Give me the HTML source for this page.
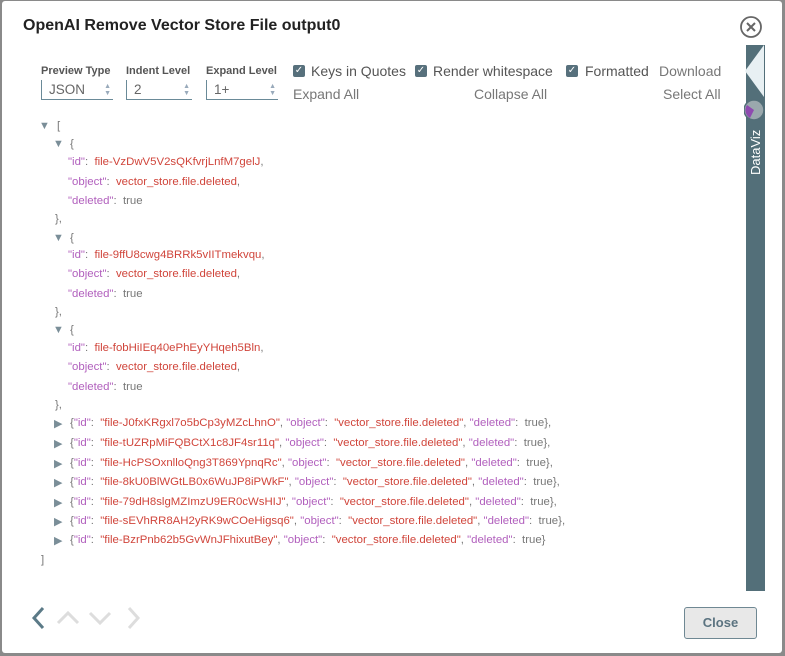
<!DOCTYPE html>
<html><head><style>
body{margin:0;width:785px;height:656px;background:#8a8a8a;font-family:"Liberation Sans",sans-serif;position:relative;overflow:hidden}
.dlg{position:absolute;left:2px;top:1px;width:780px;height:652px;background:#fff;border-radius:3px}
.t{position:absolute;left:21px;top:16px;font-size:16px;font-weight:bold;color:#222}
.lbl{position:absolute;top:64px;font-size:11px;font-weight:bold;color:#555}
.sel{position:absolute;top:79px;height:20px;border:1px solid #6a8a98;border-top:none;border-right:none;font-size:13.5px;color:#666;box-sizing:border-box;padding-left:7px;line-height:20px}
.sel i{position:absolute;right:2px;top:3px;font-style:normal;font-size:7px;line-height:7px;color:#9ab}
.cb{position:absolute;top:64px;width:12px;height:12px;background:#57707c;border-radius:2px;color:#fff;font-size:10px;line-height:12px;text-align:center}
.tx{position:absolute;font-size:14px;color:#555}
.lk{position:absolute;font-size:14px;color:#777}
.ln{position:absolute;font-size:11.4px;color:#777;white-space:pre}
.k{color:#b15fbd}.v{color:#d0453b}.g{color:#888}
.ar{position:absolute;font-size:11px;color:#7a8e98}
.side{position:absolute;left:744px;top:44px;width:19px;height:546px;background:#536f79}
</style></head><body>
<div class="dlg">
<div class="t">OpenAI Remove Vector Store File output0</div>
<svg style="position:absolute;left:737px;top:14px" width="24" height="24"><circle cx="12" cy="12" r="10" fill="none" stroke="#666" stroke-width="1.8"/><path d="M8 8L16 16M16 8L8 16" stroke="#666" stroke-width="2"/></svg>
<div class="lbl" style="left:39px">Preview Type</div>
<div class="lbl" style="left:124px">Indent Level</div>
<div class="lbl" style="left:204px">Expand Level</div>
<div class="sel" style="left:39px;width:72px">JSON<i>▲<br>▼</i></div>
<div class="sel" style="left:124px;width:66px">2<i>▲<br>▼</i></div>
<div class="sel" style="left:204px;width:72px">1+<i>▲<br>▼</i></div>
<div class="cb" style="left:291px">✓</div><div class="tx" style="left:309px;top:62px">Keys in Quotes</div>
<div class="cb" style="left:413px">✓</div><div class="tx" style="left:431px;top:62px">Render whitespace</div>
<div class="cb" style="left:564px">✓</div><div class="tx" style="left:583px;top:62px">Formatted</div>
<div class="lk" style="left:657px;top:62px">Download</div>
<div class="lk" style="left:291px;top:85px">Expand All</div>
<div class="lk" style="left:472px;top:85px">Collapse All</div>
<div class="lk" style="left:661px;top:85px">Select All</div>
<div class="side"></div>
<svg style="position:absolute;left:742px;top:44px" width="22" height="80"><path d="M20 0L20 52L1 26Z" fill="#e8f0f3"/><circle cx="10" cy="65" r="10" fill="#9aa8ad" stroke="#536f79" stroke-width="1.5"/><path d="M10 65L3 60A9 9 0 0 0 6 73Z" fill="#8e4bb0"/></svg>
<div style="position:absolute;left:744px;top:120px;width:19px;height:56px;"><div style="transform:rotate(-90deg);transform-origin:0 0;position:absolute;left:2px;top:54px;color:#fff;font-size:13px;white-space:nowrap">DataViz</div></div>
<div class="ar" style="left:37px;top:119px">▼</div><div class="ln" style="left:55px;top:119px">[</div>
<div class="ar" style="left:51px;top:137px">▼</div><div class="ln" style="left:68px;top:137px">{</div>
<div class="ln" style="left:66px;top:155px"><span class="k">"id"</span>:  <span class="v">file-VzDwV5V2sQKfvrjLnfM7gelJ</span>,</div>
<div class="ln" style="left:66px;top:175px"><span class="k">"object"</span>:  <span class="v">vector_store.file.deleted</span>,</div>
<div class="ln" style="left:66px;top:194px"><span class="k">"deleted"</span>:  true</div>
<div class="ln" style="left:53px;top:212px">},</div>
<div class="ar" style="left:51px;top:231px">▼</div><div class="ln" style="left:68px;top:231px">{</div>
<div class="ln" style="left:66px;top:248px"><span class="k">"id"</span>:  <span class="v">file-9ffU8cwg4BRRk5vIITmekvqu</span>,</div>
<div class="ln" style="left:66px;top:267px"><span class="k">"object"</span>:  <span class="v">vector_store.file.deleted</span>,</div>
<div class="ln" style="left:66px;top:287px"><span class="k">"deleted"</span>:  true</div>
<div class="ln" style="left:53px;top:305px">},</div>
<div class="ar" style="left:51px;top:323px">▼</div><div class="ln" style="left:68px;top:323px">{</div>
<div class="ln" style="left:66px;top:341px"><span class="k">"id"</span>:  <span class="v">file-fobHiIEq40ePhEyYHqeh5Bln</span>,</div>
<div class="ln" style="left:66px;top:360px"><span class="k">"object"</span>:  <span class="v">vector_store.file.deleted</span>,</div>
<div class="ln" style="left:66px;top:380px"><span class="k">"deleted"</span>:  true</div>
<div class="ln" style="left:53px;top:398px">},</div>
<div class="ar" style="left:52px;top:416px">▶</div><div class="ln" style="left:68px;top:416px">{<span class="k">"id"</span>:  <span class="v">"file-J0fxKRgxl7o5bCp3yMZcLhnO"</span>, <span class="k">"object"</span>:  <span class="v">"vector_store.file.deleted"</span>, <span class="k">"deleted"</span>:  true},</div>
<div class="ar" style="left:52px;top:436px">▶</div><div class="ln" style="left:68px;top:436px">{<span class="k">"id"</span>:  <span class="v">"file-tUZRpMiFQBCtX1c8JF4sr11q"</span>, <span class="k">"object"</span>:  <span class="v">"vector_store.file.deleted"</span>, <span class="k">"deleted"</span>:  true},</div>
<div class="ar" style="left:52px;top:456px">▶</div><div class="ln" style="left:68px;top:456px">{<span class="k">"id"</span>:  <span class="v">"file-HcPSOxnlloQng3T869YpnqRc"</span>, <span class="k">"object"</span>:  <span class="v">"vector_store.file.deleted"</span>, <span class="k">"deleted"</span>:  true},</div>
<div class="ar" style="left:52px;top:475px">▶</div><div class="ln" style="left:68px;top:475px">{<span class="k">"id"</span>:  <span class="v">"file-8kU0BlWGtLB0x6WuJP8iPWkF"</span>, <span class="k">"object"</span>:  <span class="v">"vector_store.file.deleted"</span>, <span class="k">"deleted"</span>:  true},</div>
<div class="ar" style="left:52px;top:495px">▶</div><div class="ln" style="left:68px;top:495px">{<span class="k">"id"</span>:  <span class="v">"file-79dH8slgMZImzU9ER0cWsHIJ"</span>, <span class="k">"object"</span>:  <span class="v">"vector_store.file.deleted"</span>, <span class="k">"deleted"</span>:  true},</div>
<div class="ar" style="left:52px;top:514px">▶</div><div class="ln" style="left:68px;top:514px">{<span class="k">"id"</span>:  <span class="v">"file-sEVhRR8AH2yRK9wCOeHigsq6"</span>, <span class="k">"object"</span>:  <span class="v">"vector_store.file.deleted"</span>, <span class="k">"deleted"</span>:  true},</div>
<div class="ar" style="left:52px;top:533px">▶</div><div class="ln" style="left:68px;top:533px">{<span class="k">"id"</span>:  <span class="v">"file-BzrPnb62b5GvWnJFhixutBey"</span>, <span class="k">"object"</span>:  <span class="v">"vector_store.file.deleted"</span>, <span class="k">"deleted"</span>:  true}</div>
<div class="ln" style="left:39px;top:553px">]</div>
<svg style="position:absolute;left:26px;top:604px" width="120" height="26"><path d="M15 3L6 13L15 23" fill="none" stroke="#5b7a87" stroke-width="3"/><path d="M30 18L40 8L50 18" fill="none" stroke="#ddd" stroke-width="3"/><path d="M62 8L72 18L82 8" fill="none" stroke="#ddd" stroke-width="3"/><path d="M101 3L110 13L101 23" fill="none" stroke="#ddd" stroke-width="3"/></svg>
<div style="position:absolute;left:682px;top:606px;width:73px;height:32px;background:#e8e8e8;border:1px solid #6f8893;border-radius:3px;box-sizing:border-box;text-align:center;line-height:30px;font-size:13px;font-weight:bold;color:#5b7380">Close</div>
</div>
</body></html>
